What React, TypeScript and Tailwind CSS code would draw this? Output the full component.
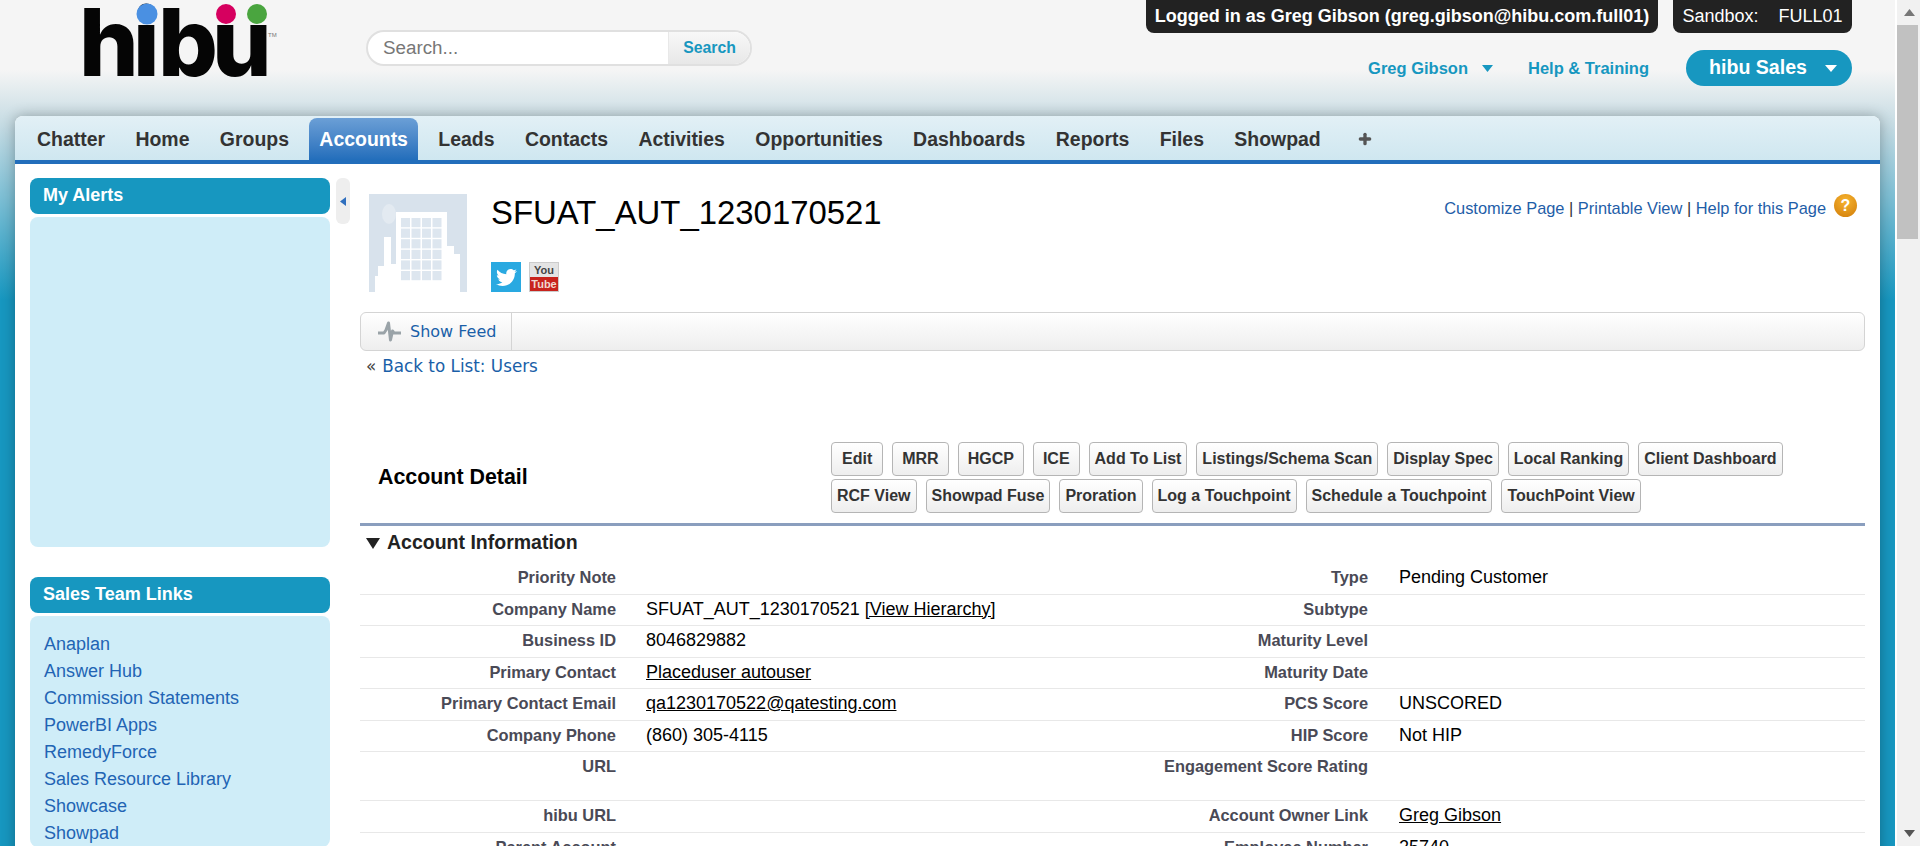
import { Plus } from 'lucide-react';
import { FaTwitter } from 'react-icons/fa';

const tabs = ['Chatter', 'Home', 'Groups', 'Accounts', 'Leads', 'Contacts', 'Activities', 'Opportunities', 'Dashboards', 'Reports', 'Files', 'Showpad'];

const actions = ['Edit', 'MRR', 'HGCP', 'ICE', 'Add To List', 'Listings/Schema Scan', 'Display Spec', 'Local Ranking', 'Client Dashboard', 'RCF View', 'Showpad Fuse', 'Proration', 'Log a Touchpoint', 'Schedule a Touchpoint', 'TouchPoint View'];

const shortActions = ['MRR', 'HGCP', 'ICE'];

const salesLinks = ['Anaplan', 'Answer Hub', 'Commission Statements', 'PowerBI Apps', 'RemedyForce', 'Sales Resource Library', 'Showcase', 'Showpad'];

type Row = {
  leftLabel: string;
  leftValue?: React.ReactNode;
  rightLabel: string;
  rightValue?: React.ReactNode;
  tall?: boolean;
};

const rows: Row[] = [
  { leftLabel: 'Priority Note', rightLabel: 'Type', rightValue: 'Pending Customer' },
  {
    leftLabel: 'Company Name',
    leftValue: (
      <>
        SFUAT_AUT_1230170521 <span className="underline">[View Hierarchy]</span>
      </>
    ),
    rightLabel: 'Subtype',
  },
  { leftLabel: 'Business ID', leftValue: '8046829882', rightLabel: 'Maturity Level' },
  { leftLabel: 'Primary Contact', leftValue: <span className="underline">Placeduser autouser</span>, rightLabel: 'Maturity Date' },
  { leftLabel: 'Primary Contact Email', leftValue: <span className="underline">qa1230170522@qatesting.com</span>, rightLabel: 'PCS Score', rightValue: 'UNSCORED' },
  { leftLabel: 'Company Phone', leftValue: '(860) 305-4115', rightLabel: 'HIP Score', rightValue: 'Not HIP' },
  { leftLabel: 'URL', rightLabel: 'Engagement Score Rating', tall: true },
  { leftLabel: 'hibu URL', rightLabel: 'Account Owner Link', rightValue: <span className="underline">Greg Gibson</span> },
  { leftLabel: 'Parent Account', rightLabel: 'Employee Number', rightValue: '25740' },
];

function Logo() {
  return (
    <svg className="h-[90px] w-[220px] shrink-0" viewBox="70 0 220 90" aria-label="hibu">
      <text x="79 133 158 212" y="76" fontFamily="Inter, sans-serif" fontSize="94" fontWeight="800" fill="#050505">
        hibu
      </text>
      <circle cx="147" cy="14" r="10.5" fill="#4a90e2" />
      <circle cx="226" cy="14" r="10" fill="#d6005f" />
      <circle cx="257" cy="14" r="10" fill="#4aa53f" />
      <text x="268" y="37" fontFamily="Liberation Sans, sans-serif" fontSize="6" fill="#777">
        TM
      </text>
    </svg>
  );
}

function BuildingIcon() {
  return (
    <svg className="h-[98px] w-[98px] shrink-0" viewBox="0 0 98 98">
      <rect width="98" height="98" fill="#d8e2ec" />
      <ellipse cx="20" cy="20" rx="7" ry="10" fill="#e3eaf1" />
      <polygon fill="#fff" points="6,98 6,82 9,82 9,72 15,72 15,43 22,43 22,70 27,70 27,18 78,18 78,52 85,52 85,60 91,60 91,98" />
      {[0, 1, 2, 3, 4, 5].map((row) =>
        [0, 1, 2, 3].map((col) => (
          <rect key={`${row}-${col}`} x={32 + col * 10.5} y={24 + row * 10.6} width="9" height="9.2" fill="#dde6ef" />
        )),
      )}
    </svg>
  );
}

function PulseIcon() {
  return (
    <svg className="h-[24px] w-[24px] shrink-0" viewBox="0 0 24 24" fill="none">
      <path d="M1 13h6l2-3 2.5-7 2 17 2-9 1.5 2h7" stroke="#9aa3a8" strokeWidth="3" strokeLinejoin="round" />
    </svg>
  );
}

function ActionButton({ label }: { label: string }) {
  const padding = label === 'Edit' ? 'px-[10px]' : shortActions.includes(label) ? 'px-[9px]' : 'px-[5px]';

  return (
    <button className={`h-[34px] rounded-[4px] border border-[#b5b5b5] bg-gradient-to-b from-white to-[#eeeeee] text-[16px] font-bold text-[#333] ${padding}`} type="button">
      {label}
    </button>
  );
}

function SideHeader({ title }: { title: string }) {
  return <div className="flex h-[36px] items-center rounded-[8px] bg-[#1797c0] pb-[2px] pl-[13px] text-[18px] font-bold text-white">{title}</div>;
}

export default function App() {
  return (
    <div className="flex h-[846px] overflow-hidden font-['Liberation_Sans',Arial,sans-serif]">
      <div className="h-full w-[1895px] shrink-0 bg-[linear-gradient(to_bottom,#f5f5f5_0px,#f5f5f5_70px,#c5dbe3_125px,#1797c0_300px)]">
        <header className="flex h-[116px]">
          <div className="ml-[70px]">
            <Logo />
          </div>
          <div className="mt-[30px] ml-[76px] flex h-[36px] w-[386px] overflow-hidden rounded-full border-2 border-[#e0e0e0] bg-white">
            <div className="flex-1 pl-[15px] text-[18.8px] leading-[32px] text-[#777]">Search...</div>
            <div className="flex w-[82px] items-center justify-center border-l border-[#e8e8e8] bg-gradient-to-b from-[#f8f8f8] to-[#e8e8e8] text-[15.8px] font-bold text-[#1797c0]">Search</div>
          </div>
          <div className="ml-auto flex flex-col items-end pr-[43px]">
            <div className="flex gap-[15px]">
              <div className="flex h-[33px] w-[512px] items-center justify-center rounded-b-[8px] bg-[#222] text-[18px] font-bold whitespace-nowrap text-white">Logged in as Greg Gibson (greg.gibson@hibu.com.full01)</div>
              <div className="flex h-[33px] w-[179px] items-center justify-center gap-[20px] rounded-b-[8px] bg-[#222] text-[18px] whitespace-nowrap text-white">
                <span>Sandbox:</span>
                <span>FULL01</span>
              </div>
            </div>
            <div className="mt-[17px] flex h-[36px] items-center">
              <span className="text-[16.5px] font-bold text-[#1797c0]">Greg Gibson</span>
              <svg className="ml-[14px] h-[7px] w-[11px]" viewBox="0 0 11 7">
                <polygon points="0,0 11,0 5.5,7" fill="#1797c0" />
              </svg>
              <span className="ml-[35px] text-[16.5px] font-bold text-[#1797c0]">Help &amp; Training</span>
              <div className="ml-[37px] flex h-[36px] w-[166px] items-center rounded-[18px] bg-[#1797c0] pl-[23px] text-[19.6px] font-bold text-white">
                hibu Sales
                <svg className="ml-[18px] h-[7px] w-[12px]" viewBox="0 0 12 7">
                  <polygon points="0,0 12,0 6,7" fill="#fff" />
                </svg>
              </div>
            </div>
          </div>
        </header>

        <div className="ml-[15px] h-[800px] w-[1865px] overflow-hidden rounded-t-[8px] bg-white shadow-[0_0_14px_rgba(0,0,0,0.3)]">
          <nav className="flex h-[48px] items-end gap-[10.4px] border-b-4 border-[#226ebb] bg-gradient-to-b from-[#e2f0f6] to-[#cfe7f0] pl-[12px]">
            {tabs.map((tab) => (
              <div key={tab} className={`flex h-[42px] items-center rounded-t-[8px] px-[10px] pt-[1px] text-[19.45px] font-bold ${tab === 'Accounts' ? 'bg-gradient-to-b from-[#6b9fd6] to-[#226ebb] text-white' : 'text-[#333]'}`}>
                {tab}
              </div>
            ))}
            <div className="ml-[16px] flex h-[42px] items-center">
              <Plus size={16} strokeWidth={5} className="text-[#555]" />
            </div>
          </nav>

          <div className="flex">
            <aside className="ml-[15px] w-[300px] shrink-0 pt-[14px]">
              <SideHeader title="My Alerts" />
              <div className="mt-[3px] h-[330px] rounded-[8px] bg-[#cfedf8]" />
              <div className="mt-[30px]">
                <SideHeader title="Sales Team Links" />
                <div className="mt-[3px] rounded-[8px] bg-[#cfedf8] pt-[15px] pl-[14px] text-[18px] leading-[27px] text-[#2264b4]">
                  {salesLinks.map((link) => (
                    <div key={link}>{link}</div>
                  ))}
                </div>
              </div>
            </aside>

            <div className="mt-[14px] ml-[6px] flex h-[46px] w-[14px] shrink-0 items-center justify-center rounded-[6px] bg-[#eeeeee]">
              <svg className="h-[9px] w-[6px]" viewBox="0 0 6 9">
                <polygon points="6,0 6,9 0,4.5" fill="#2f6fbe" />
              </svg>
            </div>

            <main className="ml-[10px] w-[1505px] shrink-0 pt-[30px]">
              <div className="flex h-[98px] pl-[9px]">
                <BuildingIcon />
                <div className="ml-[24px] flex flex-col justify-between">
                  <h1 className="text-[32.9px] leading-[37px] text-black">SFUAT_AUT_1230170521</h1>
                  <div className="flex gap-[8px]">
                    <div className="flex h-[30px] w-[30px] items-center justify-center bg-[#29a9e1]">
                      <FaTwitter size={21} color="#fff" />
                    </div>
                    <div className="flex h-[30px] w-[30px] flex-col overflow-hidden border border-[#ccc] text-center text-[11px] leading-[14px] font-bold">
                      <div className="h-[14px] bg-[#e4e4e4] text-[#444]">You</div>
                      <div className="flex-1 bg-[#c8231d] text-[#f0d8d0]">Tube</div>
                    </div>
                  </div>
                </div>
                <div className="ml-auto flex h-[24px] items-start pr-[8px] text-[16.4px] text-[#1f5ea8]">
                  <span className="mt-[2px]">
                    Customize Page <span className="text-[#333]">|</span> Printable View <span className="text-[#333]">|</span> Help for this Page
                  </span>
                  <div className="ml-[8px] flex h-[23px] w-[23px] items-center justify-center rounded-full bg-[radial-gradient(circle_at_50%_30%,#f7b430,#d07c08)] text-[16px] font-bold text-white">?</div>
                </div>
              </div>

              <div className="mt-[20px] flex h-[39px] items-center rounded-[6px] border border-[#d4d4d4] bg-gradient-to-b from-white to-[#eeeeee]">
                <div className="flex h-full w-[151px] items-center border-r border-[#d4d4d4] pl-[16px] font-['DejaVu_Sans',sans-serif] text-[16px] text-[#1a5fa8]">
                  <PulseIcon />
                  <span className="ml-[9px] whitespace-nowrap">Show Feed</span>
                </div>
              </div>

              <div className="flex h-[32px] items-center pl-[6px] font-['DejaVu_Sans',sans-serif] text-[16.8px] text-[#1a5fa8]">
                <span className="mr-[6px] text-[#444]">«</span>
                Back to List: Users
              </div>

              <div className="mt-[59px] flex items-start">
                <div className="flex h-[70px] w-[471px] shrink-0 items-center pl-[18px] text-[21.4px] font-bold text-black">Account Detail</div>
                <div className="flex flex-1 flex-wrap gap-x-[9px] gap-y-[3px] pr-[70px]">
                  {actions.map((action) => (
                    <ActionButton key={action} label={action} />
                  ))}
                </div>
              </div>

              <div className="mt-[10px] h-[3px] bg-[#8a9ebe]" />

              <div className="flex h-[37px] items-center pb-[3px] pl-[6px] text-[19.5px] font-bold text-[#222]">
                <svg className="mr-[7px] h-[11px] w-[14px]" viewBox="0 0 14 11">
                  <polygon points="0,0 14,0 7,11" fill="#222" />
                </svg>
                Account Information
              </div>

              {rows.map((row) => (
                <div key={row.leftLabel} className={`grid grid-cols-[256px_510px_242px_497px] border-b border-[#e8e8e8] pt-[4px] leading-[20px] ${row.tall ? 'h-[49px]' : 'h-[31.5px]'}`}>
                  <div className="text-right text-[16.4px] font-bold text-[#4a4a56]">{row.leftLabel}</div>
                  <div className="pl-[30px] text-[18px] text-black">{row.leftValue}</div>
                  <div className="text-right text-[16.4px] font-bold whitespace-nowrap text-[#4a4a56]">{row.rightLabel}</div>
                  <div className="pl-[31px] text-[18px] text-black">{row.rightValue}</div>
                </div>
              ))}
            </main>
          </div>
        </div>
      </div>

      <div className="flex h-full w-[25px] shrink-0 flex-col bg-[#f1f1f1] pl-[2px]" style={{ boxShadow: 'inset 2px 0 0 #fff' }}>
        <div className="flex h-[25px] items-center justify-center pl-[2px]">
          <svg className="h-[7px] w-[11px]" viewBox="0 0 11 7">
            <polygon points="5.5,0 11,7 0,7" fill="#777" />
          </svg>
        </div>
        <div className="h-[214px] w-[21px] bg-[#c1c1c1]" />
        <div className="mt-auto flex h-[25px] items-center justify-center pl-[2px]">
          <svg className="h-[7px] w-[11px]" viewBox="0 0 11 7">
            <polygon points="0,0 11,0 5.5,7" fill="#555" />
          </svg>
        </div>
      </div>
    </div>
  );
}
